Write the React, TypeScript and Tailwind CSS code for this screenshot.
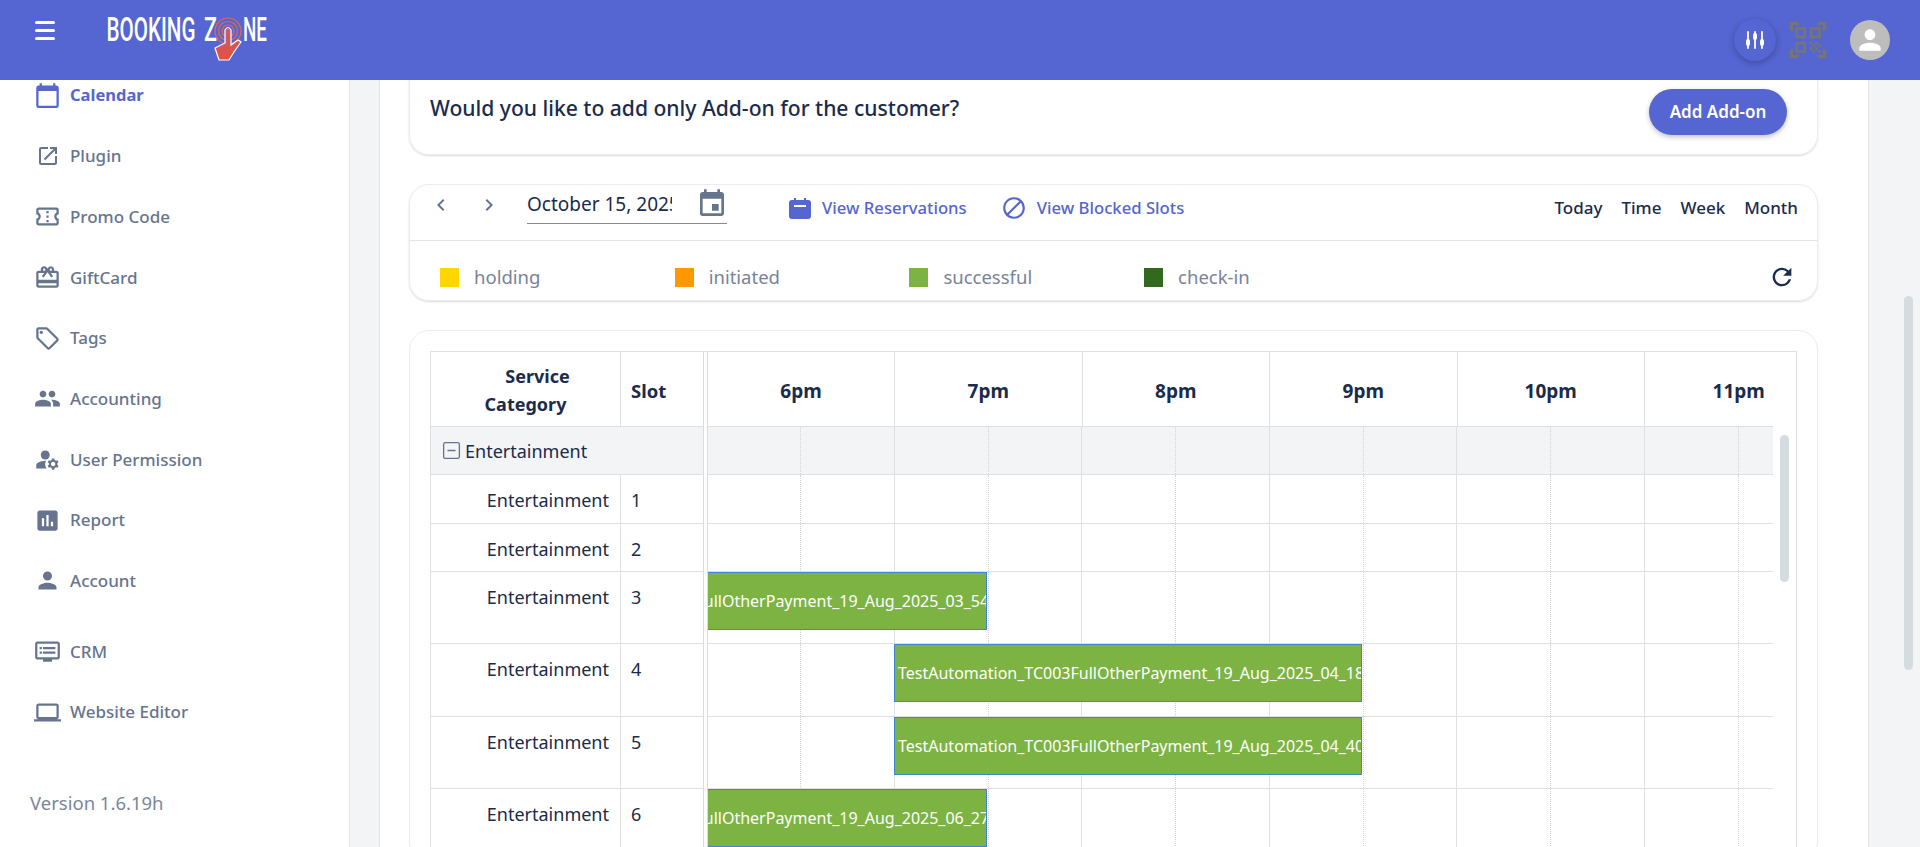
import React from 'react';
import { SquareMinus } from 'lucide-react';
import {
  MdBlock,
  MdCalendarToday,
  MdChevronLeft,
  MdChevronRight,
  MdEvent,
  MdManageAccounts,
  MdOpenInNew,
  MdOutlineCardGiftcard,
  MdOutlineConfirmationNumber,
  MdOutlineDvr,
  MdOutlineLaptop,
  MdOutlineLocalOffer,
  MdPeople,
  MdPerson,
  MdAssessment,
  MdQrCodeScanner,
  MdRefresh,
} from 'react-icons/md';

const navItems = [
  { label: 'Calendar', icon: MdCalendarToday, active: true },
  { label: 'Plugin', icon: MdOpenInNew, small: true },
  { label: 'Promo Code', icon: MdOutlineConfirmationNumber },
  { label: 'GiftCard', icon: MdOutlineCardGiftcard },
  { label: 'Tags', icon: MdOutlineLocalOffer },
  { label: 'Accounting', icon: MdPeople },
  { label: 'User Permission', icon: MdManageAccounts },
  { label: 'Report', icon: MdAssessment },
  { label: 'Account', icon: MdPerson },
];

const bottomNavItems = [
  { label: 'CRM', icon: MdOutlineDvr },
  { label: 'Website Editor', icon: MdOutlineLaptop },
];

const legend = [
  { label: 'holding', color: 'bg-[#ffd600]' },
  { label: 'initiated', color: 'bg-[#ff9800]' },
  { label: 'successful', color: 'bg-[#7cb342]' },
  { label: 'check-in', color: 'bg-[#33691e]' },
];

const hours = ['6pm', '7pm', '8pm', '9pm', '10pm', '11pm'];

const rows = [
  { slot: '1', height: 'h-[49px]' },
  { slot: '2', height: 'h-[48px]' },
  { slot: '3', height: 'h-[72px]', bar: { left: 'left-[-189px]', label: 'TestAutomation_TC003FullOtherPayment_19_Aug_2025_03_54' } },
  { slot: '4', height: 'h-[73px]', bar: { left: 'left-[186px]', label: 'TestAutomation_TC003FullOtherPayment_19_Aug_2025_04_18' } },
  { slot: '5', height: 'h-[72px]', bar: { left: 'left-[186px]', label: 'TestAutomation_TC003FullOtherPayment_19_Aug_2025_04_40' } },
  { slot: '6', height: 'h-[72px]', bar: { left: 'left-[-189px]', label: 'TestAutomation_TC003FullOtherPayment_19_Aug_2025_06_27' } },
];

const Logo = () => (
  <svg width="180" height="64" viewBox="100 8 180 64" className="ml-[45px]">
    <defs>
      <linearGradient id="handFill" x1="0" y1="0" x2="0" y2="1">
        <stop offset="0" stopColor="#b8607c" />
        <stop offset="1" stopColor="#e8503a" />
      </linearGradient>
    </defs>
    <g fill="#fff" fontFamily="Roboto, sans-serif" fontWeight="500" fontSize="33">
      <text x="106.5" y="41" textLength="89" lengthAdjust="spacingAndGlyphs">BOOKING</text>
      <text x="204" y="41" textLength="13" lengthAdjust="spacingAndGlyphs">Z</text>
      <text x="243" y="41" textLength="24" lengthAdjust="spacingAndGlyphs">NE</text>
    </g>
    <g fill="none" stroke="#e8664a" strokeWidth="1.2">
      <circle cx="228" cy="31" r="6" />
      <circle cx="228" cy="31" r="9.5" />
      <circle cx="228" cy="31" r="13" />
    </g>
    <path
      d="M225 30Q228 25 231 30L231 45L238 40L241 42L234 52L229 60L219 60L215 48L225 43Z"
      fill="url(#handFill)"
      stroke="#fff"
      strokeWidth="1.2"
    />
  </svg>
);

const SlidersIcon = () => (
  <svg width="20" height="20" viewBox="0 0 20 20" fill="none" stroke="#fff" strokeWidth="1.8" strokeLinecap="round">
    <path d="M3 2v16M10 2v16M17 2v16" />
    <path d="M3 11v3M10 5v3M17 11v3" strokeWidth="4" />
  </svg>
);

const ReservationIcon = () => (
  <svg width="22" height="21" viewBox="0 0 22 21">
    <path
      d="M5 0h2v2h8V0h2v2h2a3 3 0 0 1 3 3v13a3 3 0 0 1-3 3H3a3 3 0 0 1-3-3V5a3 3 0 0 1 3-3h2z"
      fill="#5565d1"
    />
    <rect x="5" y="7" width="12" height="2" fill="#fff" />
  </svg>
);

const Sidebar = () => (
  <aside className="relative flex h-full w-[350px] shrink-0 flex-col overflow-hidden border-r border-[#e3e5e8] bg-white">
    <nav className="mt-[-15px]">
      {navItems.map((item) => (
        <div key={item.label} className="flex h-[60.7px] items-center pl-[34px]">
          <span className="flex w-[27px] justify-center">
            <item.icon
              className={`${item.small ? 'h-6 w-6' : 'h-[27px] w-[27px]'} ${item.active ? 'text-[#5565d1]' : 'text-[#67748e]'}`}
            />
          </span>
          <span className={`ml-[9px] ${item.active ? 'text-[16.5px] font-bold text-[#5565d1]' : 'text-[17px] font-medium text-[#67748e]'}`}>
            {item.label}
          </span>
        </div>
      ))}
    </nav>
    <nav className="mt-[10px]">
      {bottomNavItems.map((item) => (
        <div key={item.label} className="flex h-[60.7px] items-center pl-[34px]">
          <item.icon className="h-[27px] w-[27px] text-[#67748e]" />
          <span className="ml-[9px] text-[17px] font-medium text-[#67748e]">{item.label}</span>
        </div>
      ))}
    </nav>
    <p className="mt-[46px] pl-[30px] text-[18.5px] text-[#7a869c]">Version 1.6.19h</p>
  </aside>
);

const GanttRow = ({ children, shaded, height }: { children?: React.ReactNode; shaded?: boolean; height: string }) => (
  <div className={`relative flex overflow-hidden border-b border-[#e0e0e0] ${height} ${shaded ? 'bg-[#f3f4f6]' : ''}`}>
    <div className="h-full w-[93px] shrink-0 border-r border-dotted border-[#d4d4d4]" />
    {hours.map((hour, i) => (
      <React.Fragment key={hour}>
        <div className="h-full w-[93.75px] shrink-0 border-r border-[#e0e0e0]" />
        {i < 5 && <div className="h-full w-[93.75px] shrink-0 border-r border-dotted border-[#d4d4d4]" />}
      </React.Fragment>
    ))}
    {children}
  </div>
);

const Scheduler = () => (
  <div className="flex border-x border-t border-[#e0e0e0] text-[18px] text-[#1a2b4b]">
    <div className="w-[272px] shrink-0">
      <div className="flex h-[75px] border-b border-[#e0e0e0] font-bold">
        <div className="flex w-[190px] flex-col items-center justify-center border-r border-[#e0e0e0] pt-[2px] leading-[28px]">
          <span className="ml-[24px]">Service</span>
          <span>Category</span>
        </div>
        <div className="flex items-center pt-[3px] pl-[10px] text-[18.5px]">Slot</div>
      </div>
      <div className="flex h-[48px] items-center border-b border-[#e0e0e0] bg-[#f3f4f6] pl-[10px]">
        <SquareMinus className="h-[21px] w-[21px] text-[#67748e]" strokeWidth={1.5} />
        <span className="ml-[3px] pt-[2px]">Entertainment</span>
      </div>
      {rows.map((row) => (
        <div key={row.slot} className={`flex border-b border-[#e0e0e0] ${row.height}`}>
          <div className="w-[190px] border-r border-[#e0e0e0] pt-[11px] pr-[11px] text-right leading-[28px]">Entertainment</div>
          <div className="pt-[11px] pl-[10px] leading-[28px]">{row.slot}</div>
        </div>
      ))}
    </div>
    <div className="w-[5px] shrink-0 border-x border-[#dcdcdc]" />
    <div className="relative flex-1">
      <div className="flex h-[75px] text-[19px] font-bold">
        {hours.map((hour, i) => (
          <div
            key={hour}
            className={`flex shrink-0 items-center justify-center pt-[3px] ${i === 0 ? 'w-[187px]' : 'w-[187.5px]'} ${i < 5 ? 'border-r border-[#e0e0e0]' : ''}`}
          >
            {hour}
          </div>
        ))}
      </div>
      <div className="mt-[-1px] w-[1065px] border-t border-[#e0e0e0]">
        <GanttRow shaded height="h-[48px]" />
        {rows.map((row) => (
          <GanttRow key={row.slot} height={row.height}>
            {row.bar && (
              <div
                className={`absolute top-0 flex h-[58px] w-[468px] items-center overflow-hidden border border-[#3b86d8] bg-[#7cb342] px-[3px] text-[16px] whitespace-nowrap text-white ${row.bar.left}`}
              >
                {row.bar.label}
              </div>
            )}
          </GanttRow>
        ))}
      </div>
      <div className="absolute top-[83px] left-[1072px] h-[147px] w-[9px] rounded-full bg-[#d5dce0]" />
    </div>
  </div>
);

export default function App() {
  return (
    <div className="flex h-screen flex-col overflow-hidden bg-[#f3f4f6] font-['Noto_Sans',sans-serif]">
      <header className="z-10 flex h-20 shrink-0 items-center bg-[#5565d1] pr-[30px] pl-[35px]">
        <div className="mb-5 flex w-5 flex-col gap-[5px]">
          <span className="h-[3px] rounded-full bg-white" />
          <span className="h-[3px] rounded-full bg-white" />
          <span className="h-[3px] rounded-full bg-white" />
        </div>
        <Logo />
        <div className="ml-auto flex items-center">
          <button className="flex h-[42px] w-[42px] items-center justify-center rounded-full bg-[#5565d1] shadow-[0_2px_6px_rgba(0,0,0,0.25)]">
            <SlidersIcon />
          </button>
          <MdQrCodeScanner className="ml-[10px] h-11 w-11 text-[#757575]" />
          <div className="ml-5 flex h-10 w-10 items-center justify-center rounded-full bg-[#bdbdbd]">
            <MdPerson className="h-8 w-8 text-white" />
          </div>
        </div>
      </header>

      <div className="relative flex min-h-0 flex-1">
        <Sidebar />
        <main className="ml-[29px] w-[1490px] overflow-hidden border-x border-[#e3e5e8] bg-white pr-[50px] pl-[29px]">
          <section className="mt-[-20px] flex h-[95px] items-start justify-between rounded-[20px] border border-[#ececec] pr-[30px] pl-[20px] shadow-[0_1px_2px_rgba(0,0,0,0.15)]">
            <p className="mt-[33px] text-[21.1px] leading-[28px] font-medium text-[#1a2b4b]">
              Would you like to add only Add-on for the customer?
            </p>
            <button className="mt-[28px] h-[46px] w-[138px] rounded-full bg-[#5565d1] text-[17px] font-semibold text-white shadow-[0_2px_5px_rgba(0,0,0,0.25)]">
              Add Add-on
            </button>
          </section>

          <section className="mt-[29px] h-[117px] rounded-[20px] border border-[#ececec] shadow-[0_1px_2px_rgba(0,0,0,0.15)]">
            <div className="flex h-[56px] border-b border-[#e3e5e8] pr-[19px] pl-[19px]">
              <div className="flex h-[40px] items-center gap-[24px] text-[#67748e]">
                <MdChevronLeft className="h-6 w-6" />
                <MdChevronRight className="h-6 w-6" />
              </div>
              <div className="ml-[26px] flex h-[39px] w-[200px] items-center justify-between border-b border-[#8a8a8a] text-[19px] text-[#1a2b4b]">
                <span className="w-[145px] overflow-hidden pt-[1px] whitespace-nowrap">October 15, 2025</span>
                <MdEvent className="mr-[-1px] h-8 w-8 text-[#67748e]" />
              </div>
              <div className="ml-[62px] flex h-[46px] items-center text-[16.7px] font-medium text-[#5565d1]">
                <ReservationIcon />
                <span className="ml-[11px]">View Reservations</span>
                <MdBlock className="ml-[34px] h-[26px] w-[26px]" />
                <span className="ml-[10px]">View Blocked Slots</span>
              </div>
              <div className="ml-auto flex h-[46px] items-center gap-[19px] text-[17px] font-medium text-[#1a2b4b]">
                <span>Today</span>
                <span>Time</span>
                <span>Week</span>
                <span>Month</span>
              </div>
            </div>
            <div className="flex h-[60px] items-center pt-[12px] pr-[21px] pl-[30px]">
              {legend.map((item) => (
                <div key={item.label} className="flex w-[234.7px] items-center">
                  <span className={`h-[19px] w-[19px] ${item.color}`} />
                  <span className="ml-[15px] text-[18.5px] text-[#788398]">{item.label}</span>
                </div>
              ))}
              <MdRefresh className="ml-auto h-7 w-7 text-[#1a2b4b]" />
            </div>
          </section>

          <section className="mt-[29px] rounded-[20px] border border-[#ececec] px-[20px] pt-[20px]">
            <Scheduler />
          </section>
        </main>
        <div className="absolute top-[216px] right-[7px] h-[374px] w-[9px] rounded-full bg-[#d5dce0]" />
      </div>
    </div>
  );
}
